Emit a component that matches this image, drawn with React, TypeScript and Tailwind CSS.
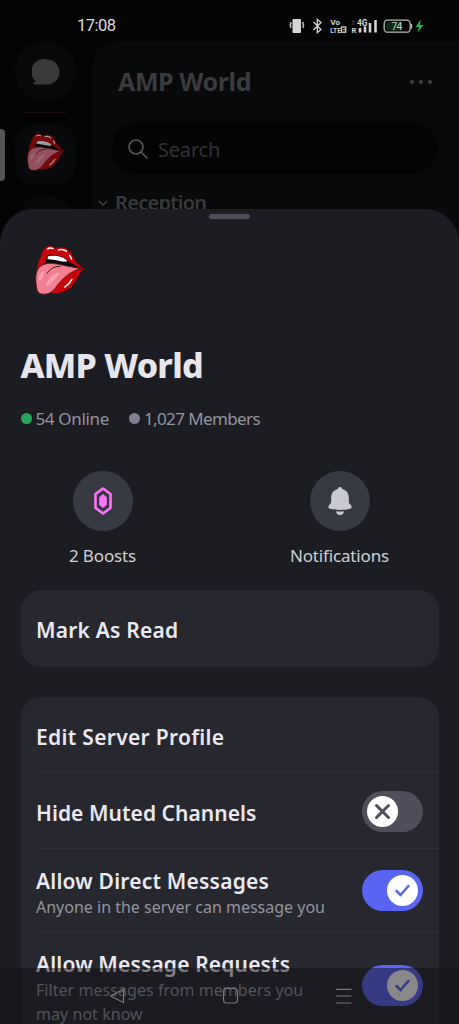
import type { ReactNode } from 'react';
import clsx from 'clsx';

function Lips({ className }: { className?: string }) {
  return (
    <svg viewBox="44 30 148 151" className={className}>
      <path
        d="M50 110C48 92 54 78 60 68C66 45 76 32 90 34C98 35 102 39 106 42C118 34 134 37 145 48C157 60 160 84 190 101C172 112 170 145 141 164C127 173 110 176 95 175Z"
        fill="#c80508"
        stroke="#3b0c10"
        strokeWidth="2"
      />
      <path d="M54 106C64 98 72 90 76 78C78 70 80 62 84 61C104 58 128 64 142 78C154 88 168 95 184 101L110 104L60 112Z" fill="#0b0709" />
      <path d="M85 64C104 61 130 65 140 79C134 83 126 80 118 79C102 75 92 75 81 73C81 69 82 66 85 64Z" fill="#fff" />
      <path
        d="M48 152C42 118 50 92 78 87C104 82 130 95 180 101C150 108 126 130 109 152C96 172 84 178 68 177C53 176 50 168 48 152Z"
        fill="#f47f92"
        stroke="#3b0c10"
        strokeWidth="2"
      />
      <path d="M118 95C100 94 86 104 80 115" fill="none" stroke="#1a0709" strokeWidth="2.500" strokeLinecap="round" />
      <path
        d="M72 108C58 112 51 132 56 136C63 137 72 120 72 108ZM117 112C96 116 80 136 76 148C76 156 86 150 94 143C104 134 112 124 117 112Z"
        fill="#fba0af"
      />
      <g fill="none" stroke="#fff" strokeLinecap="round" strokeWidth="4.500">
        <path d="M82 43C86 39 92 40 97 42M114 46C123 43 131 45 137 50" />
        <path d="M146 62C149 65 151 69 152 73" strokeWidth="4" />
        <path d="M153 133C148 143 142 150 132 156" />
      </g>
    </svg>
  );
}

function StatusBar() {
  return (
    <div className="absolute inset-x-0 top-0 flex h-[52px] items-center pr-[33px] pl-[77px] text-[#dcdcdc]">
      <span className="pt-px font-['Roboto',sans-serif] text-[16.5px] leading-none tracking-[-0.5px]">17:08</span>
      <svg viewBox="289 15 138 22" className="ml-auto h-[22px] w-[138px]" fill="none">
        <rect x="293.500" y="19" width="8.500" height="14" rx="1" fill="#d5d5d5" />
        <path d="M291 22l1.200 1.500-1.200 1.500 1.200 1.500-1.200 1.500M304.800 22l-1.200 1.500 1.200 1.500-1.200 1.500 1.200 1.500" stroke="#d5d5d5" strokeWidth="1.200" />
        <path d="M314.500 22l7.500 7.500-3.700 3.200V19.300l3.700 3.200-7.500 7.500" stroke="#d5d5d5" strokeWidth="1.300" />
        <g fill="#d5d5d5" className="font-['Roboto',sans-serif] font-bold">
          <text x="331.500" y="25" fontSize="8">Vo</text>
          <text x="331.300" y="32.800" fontSize="7.500" textLength="10.500" lengthAdjust="spacingAndGlyphs">LTE</text>
          <text x="358" y="25.500" fontSize="9" textLength="10.500" lengthAdjust="spacingAndGlyphs">4G</text>
          <text x="352.500" y="33" fontSize="7.500">R</text>
        </g>
        <rect x="342.500" y="27" width="4.200" height="5.200" stroke="#d5d5d5" strokeWidth="1.300" />
        <path d="M344 29.600h2" stroke="#d5d5d5" />
        <path d="M353 21.500h3M353 24h3" stroke="#444" />
        <path d="M361 28v4.500M366 26.500v6M371 23v9.500M376.500 20v12.500" stroke="#d5d5d5" strokeWidth="2.600" />
        <rect x="385.200" y="20.200" width="26" height="12" rx="3.500" stroke="#b9b9b9" strokeWidth="1.300" />
        <rect x="387" y="22" width="16" height="8.500" rx="2" fill="#0c2a17" />
        <path d="M412.600 24v4.500" stroke="#b9b9b9" strokeWidth="1.200" />
        <text x="392.500" y="30" fontSize="10.500" textLength="11" fill="#bcd6c4" className="font-['Roboto',sans-serif]">74</text>
        <path d="M421.800 19.500l-5.300 7.500h3.500l-1.300 5.500 5.800-7.500h-3.700Z" fill="#27b24a" />
      </svg>
    </div>
  );
}

function ServerList() {
  return (
    <div className="flex h-[260px] pt-[41px]">
      <div className="flex w-[92px] shrink-0 flex-col items-center pr-[1px]">
        <div className="flex size-[61px] shrink-0 items-center justify-center rounded-full bg-[#08090b]">
          <svg viewBox="0 0 28 28" className="size-7" fill="#3a3a3c">
            <path d="M15 1.500a12.500 12.500 0 1 1 0 25H2.300c-1 0-1.400-1.200-.6-1.800l2-1.600A12.500 12.500 0 0 1 15 1.500Z" />
          </svg>
        </div>
        <div className="mt-[10px] h-px w-[43px] shrink-0 bg-[#1b0f0d]" />
        <div className="mt-[11px] flex w-full shrink-0 items-center gap-[10px]">
          <div className="h-[52px] w-[5px] rounded-r bg-[#555]" />
          <div className="flex size-[61px] items-center justify-center rounded-[20px] bg-[#08090b] pb-[5px]">
            <Lips className="h-[40px] w-[38px] opacity-60" />
          </div>
        </div>
        <div className="mt-[10px] size-[61px] shrink-0 rounded-full bg-[#08090a]" />
      </div>

      <div className="flex-1 rounded-tl-[24px] bg-[#08090b] pr-[21px] pl-5">
        <div className="flex h-[82px] items-center justify-between px-[6px]">
          <h2 className="text-[25px] font-bold tracking-[-0.4px] text-[#3b3b3d]">AMP World</h2>
          <svg viewBox="0 0 22 4" className="h-1 w-[22px]" fill="#3f3f41">
            <circle cx="2" cy="2" r="2" />
            <circle cx="11" cy="2" r="2" />
            <circle cx="20" cy="2" r="2" />
          </svg>
        </div>
        <div className="flex h-[51px] items-center gap-[10px] rounded-full bg-[#040406] pl-4">
          <svg viewBox="0 0 20 20" className="size-5" fill="none" stroke="#555557" strokeWidth="1.700">
            <circle cx="8" cy="8" r="7" />
            <path d="M13 13l6 6" strokeLinecap="round" />
          </svg>
          <span className="pt-[2px] text-[20px] tracking-[-0.2px] text-[#323235]">Search</span>
        </div>
        <div className="-ml-[14px] flex items-center gap-[7px] pt-[15px]">
          <svg viewBox="0 0 10 6" className="h-[6px] w-[10px]" fill="none" stroke="#444447" strokeWidth="1.400">
            <path d="M1 1l4 4 4-4" />
          </svg>
          <span className="text-[20px] leading-[28px] font-semibold tracking-[-0.700px] text-[#39393b]">Reception</span>
        </div>
      </div>
    </div>
  );
}

function Toggle({ on }: { on?: boolean }) {
  return (
    <div
      className={clsx(
        'flex h-[41px] w-[61px] shrink-0 items-center rounded-full px-[5px]',
        on ? 'justify-end bg-[#5865f2]' : 'justify-start bg-[#4e4f5a]'
      )}
    >
      <svg viewBox="0 0 31 31" className="size-[31px]" fill="none" strokeLinecap="round">
        <circle cx="15.5" cy="15.5" r="15.5" fill="#fff" />
        {on ? (
          <path d="M9.500 16l4 4 8-9" stroke="#5865f2" strokeWidth="2.500" />
        ) : (
          <path d="M9.500 9.500l12 12M21.500 9.500l-12 12" stroke="#4e4f5a" strokeWidth="3" />
        )}
      </svg>
    </div>
  );
}

function Action({ label, className, children }: { label: ReactNode; className: string; children: ReactNode }) {
  return (
    <div className={clsx('flex flex-col items-center', className)}>
      <div className="flex size-[60px] items-center justify-center rounded-full bg-[#383a43]">{children}</div>
      <span className="mt-[13px] text-[17px] leading-[24px] tracking-[-0.15px] text-[#cfd0d6]">{label}</span>
    </div>
  );
}

function NavBar() {
  return (
    <div className="absolute inset-x-0 bottom-0 h-[56px] bg-[#110f13]/50">
      <svg viewBox="0 968 459 56" className="h-full w-full" fill="none" stroke="#77777b" strokeWidth="1.200">
        <path d="M110.500 996l13-7v13.500Z" strokeLinejoin="round" />
        <rect x="223.500" y="988.500" width="14" height="14.500" rx="3" />
        <path d="M336 989.300h15.500M336 996h15.500M336 1003h15.500" />
      </svg>
    </div>
  );
}

export default function App() {
  return (
    <div className="relative h-[1024px] w-[459px] overflow-hidden bg-[#040405] font-['Noto_Sans',sans-serif]">
      <ServerList />
      <StatusBar />

      <div className="absolute inset-x-0 top-[209px] bottom-0 overflow-hidden rounded-t-[34px] bg-[#1c1d22] px-[20.5px]">
        <div className="mx-auto mt-[5px] h-[5px] w-[41px] rounded-full bg-[#4e4d59]" />
        <Lips className="mt-[25px] ml-[14px] h-[52px] w-[50px]" />

        <h1 className="mt-[46px] text-[34px] leading-[46px] font-extrabold tracking-[-0.75px] text-[#e6e6ec]">AMP World</h1>
        <div className="mt-[19px] flex items-center text-[17px] leading-[24px] text-[#93949f]">
          <span className="mr-1 mb-[2px] size-[11px] rounded-full bg-[#23a55a]" />
          <span className="tracking-[-0.35px]">54 Online</span>
          <span className="mr-1 mb-[2px] ml-[20px] size-[11px] rounded-full bg-[#80818e]" />
          <span className="tracking-[-0.6px]">1,027 Members</span>
        </div>

        <div className="mt-[40px] flex justify-between">
          <Action label="2 Boosts" className="w-[164px]">
            <svg viewBox="0 0 20 28" className="h-[28px] w-[20px]">
              <path d="M10 1.500l7.500 5.500v14L10 26.500 2.500 21V7Z" fill="none" stroke="#ff73fa" strokeWidth="2.600" strokeLinejoin="round" />
              <path d="M10 7l3.800 3.300v7.400L10 21l-3.800-3.300v-7.400Z" fill="#ff73fa" />
            </svg>
          </Action>
          <Action label="Notifications" className="w-[198px]">
            <svg viewBox="0 0 24 28" className="h-[28px] w-[24px]" fill="#c9cad0">
              <path d="M12 0c1.200 0 2.100.8 2.300 1.900 4 1 6.500 4.300 6.500 8.400v4.200c0 1.500.6 2.400 1.700 3.300 1.600 1.400 1.600 3.300-.4 4-5.800 1.600-14.400 1.600-20.200 0-2-.7-2-2.600-.4-4 1.100-.9 1.700-1.800 1.700-3.300v-4.200c0-4.100 2.500-7.400 6.500-8.400C9.900.8 10.800 0 12 0Z" />
              <path d="M8 24.200c2.600.3 5.400.3 8 0 0 2.300-1.800 3.800-4 3.800s-4-1.500-4-3.800Z" />
            </svg>
          </Action>
        </div>

        <div className="mt-[22px] flex h-[77px] items-center rounded-[20px] bg-[#27272f] px-[15.5px] pt-[5px] text-[21px] font-semibold tracking-[0.2px] text-[#e9e9ef]">
          Mark As Read
        </div>

        <div className="mt-[30px] h-[360px] rounded-t-[20px] bg-[#27272f] pl-[15.5px] text-[21px] font-semibold tracking-[0.2px] text-[#e9e9ef]">
          <div className="flex h-[76px] items-center border-b border-[#303139] pt-[6px] tracking-[0.300px]">Edit Server Profile</div>
          <div className="flex h-[76px] items-center justify-between border-b border-[#303139] pt-[1px] pr-[15.5px]">
            <span className="pt-[5px] tracking-[0.05px]">Hide Muted Channels</span>
            <Toggle />
          </div>
          <div className="flex h-[83px] items-center justify-between border-b border-[#303139] pr-[15.5px]">
            <div className="pt-[6px]">
              <div className="leading-[28px]">Allow Direct Messages</div>
              <div className="text-[16px] leading-[24px] font-normal tracking-normal text-[#93949f]">
                Anyone in the server can message you
              </div>
            </div>
            <Toggle on />
          </div>
          <div className="flex items-start justify-between pt-[18px] pr-[15.5px]">
            <div className="w-[300px]">
              <div className="leading-[28px] tracking-[0.15px]">Allow Message Requests</div>
              <div className="pt-px text-[16px] leading-[23.500px] font-normal tracking-[0.05px] text-[#93949f]">
                Filter messages from members you may not know
              </div>
            </div>
            <div className="pt-[15px]">
              <Toggle on />
            </div>
          </div>
        </div>
      </div>

      <NavBar />
    </div>
  );
}
